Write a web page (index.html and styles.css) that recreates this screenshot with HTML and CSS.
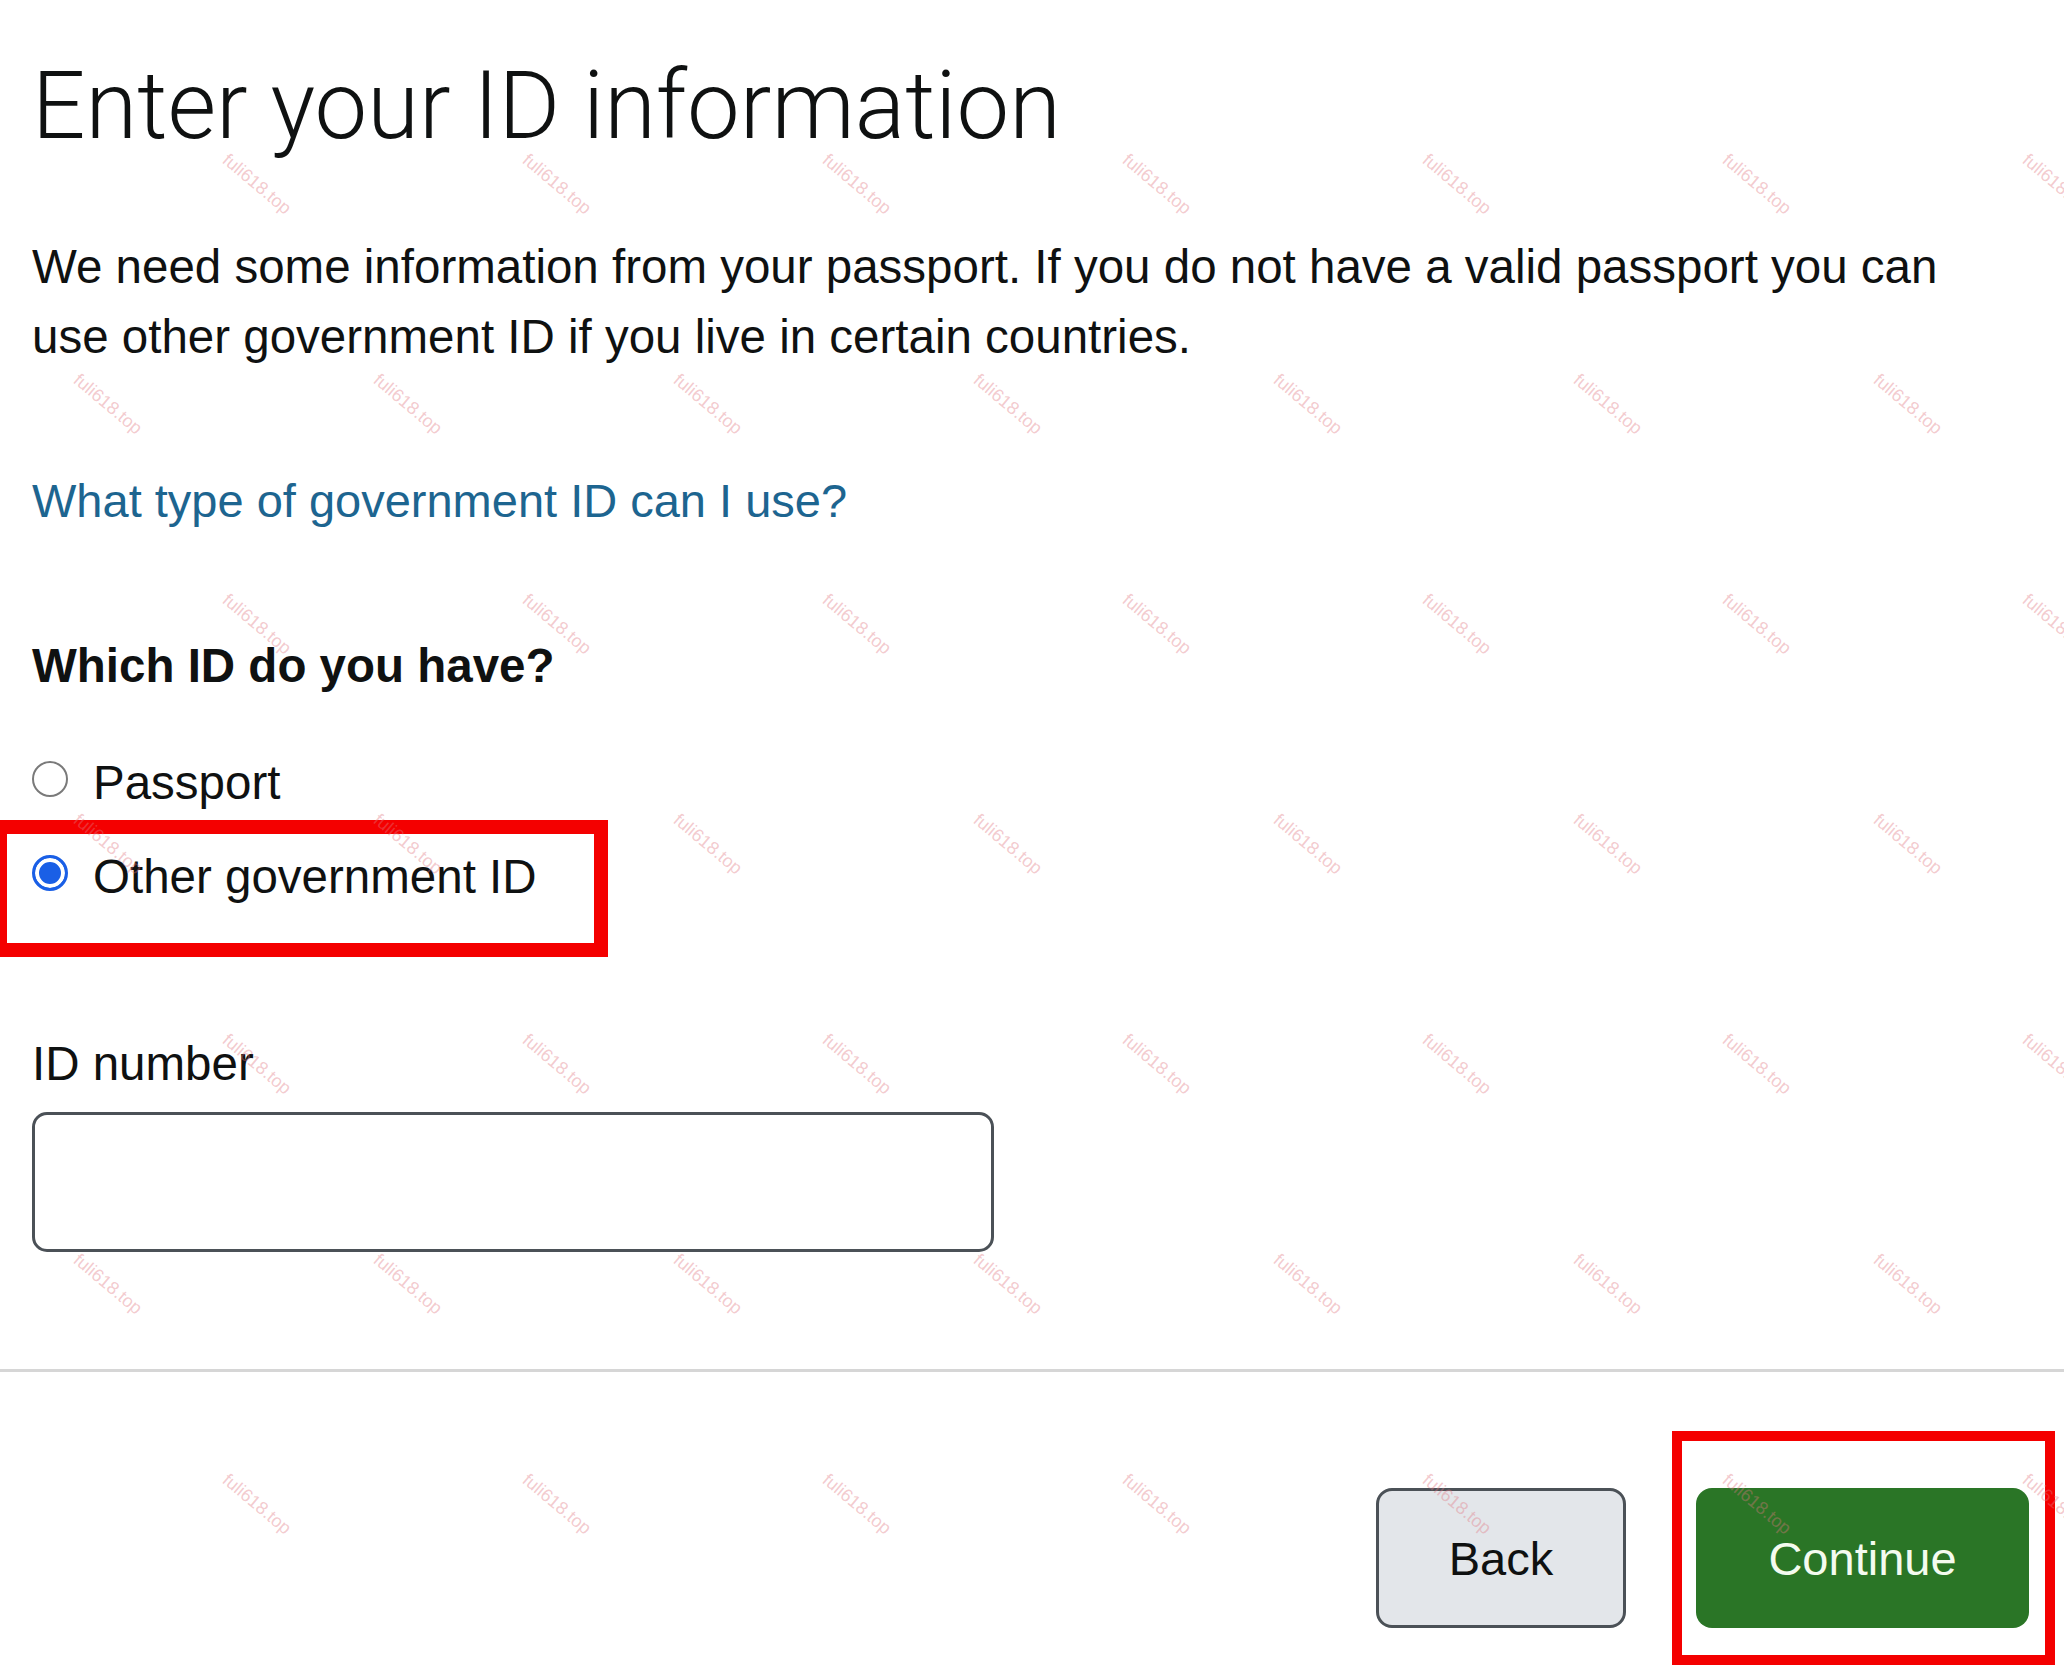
FILE: index.html
```html
<!DOCTYPE html>
<html lang="en">
<head>
<meta charset="utf-8">
<title>Enter your ID information</title>
<link rel="stylesheet" href="styles.css">
</head>
<body>
<div class="page">
  <main class="content">
    <h1 class="title">Enter your ID information</h1>
    <p class="intro">We need some information from your passport. If you do not have a valid passport you can use other government ID if you live in certain countries.</p>
    <a class="help-link" href="#">What type of government ID can I use?</a>
    <div class="id-choice" role="radiogroup" aria-labelledby="q">
      <div class="question" id="q">Which ID do you have?</div>
      <label class="option"><input type="radio" name="idtype" class="radio"><span>Passport</span></label>
      <label class="option option-highlight"><input type="radio" name="idtype" class="radio" checked><span>Other government ID</span></label>
    </div>
    <label class="field-label" for="idnum">ID number</label>
    <input class="text-input" id="idnum" type="text">
  </main>
  <hr class="divider">
  <footer class="actions">
    <button class="btn btn-back" type="button">Back</button>
    <button class="btn btn-continue" type="button">Continue</button>
  </footer>

  <div class="watermarks" aria-hidden="true">
    <div class="wm-row wm-odd"><span>fuli618.top</span><span>fuli618.top</span><span>fuli618.top</span><span>fuli618.top</span><span>fuli618.top</span><span>fuli618.top</span><span>fuli618.top</span></div>
    <div class="wm-row wm-even"><span>fuli618.top</span><span>fuli618.top</span><span>fuli618.top</span><span>fuli618.top</span><span>fuli618.top</span><span>fuli618.top</span><span>fuli618.top</span></div>
    <div class="wm-row wm-odd"><span>fuli618.top</span><span>fuli618.top</span><span>fuli618.top</span><span>fuli618.top</span><span>fuli618.top</span><span>fuli618.top</span><span>fuli618.top</span></div>
    <div class="wm-row wm-even"><span>fuli618.top</span><span>fuli618.top</span><span>fuli618.top</span><span>fuli618.top</span><span>fuli618.top</span><span>fuli618.top</span><span>fuli618.top</span></div>
    <div class="wm-row wm-odd"><span>fuli618.top</span><span>fuli618.top</span><span>fuli618.top</span><span>fuli618.top</span><span>fuli618.top</span><span>fuli618.top</span><span>fuli618.top</span></div>
    <div class="wm-row wm-even"><span>fuli618.top</span><span>fuli618.top</span><span>fuli618.top</span><span>fuli618.top</span><span>fuli618.top</span><span>fuli618.top</span><span>fuli618.top</span></div>
    <div class="wm-row wm-odd"><span>fuli618.top</span><span>fuli618.top</span><span>fuli618.top</span><span>fuli618.top</span><span>fuli618.top</span><span>fuli618.top</span><span>fuli618.top</span></div>
  </div>
</div>
</body>
</html>
```

FILE: styles.css
```css
*, *::before, *::after { box-sizing: border-box; }
html, body { margin: 0; padding: 0; background: #ffffff; }
body {
  font-family: "Liberation Sans", Arial, Helvetica, sans-serif;
  color: #0f1111;
  overflow: hidden;
}
.page {
  position: relative;
  width: 2064px;
  height: 1676px;
  overflow: hidden;
}
.content {
  padding: 51px 0 0 32px;
}
.title {
  margin: 0;
  font-family: Roboto, "Liberation Sans", sans-serif;
  font-weight: 300;
  font-size: 94px;
  line-height: 110px;
  color: #0f1111;
  letter-spacing: 0;
}
.intro {
  margin: 71px 0 0 0;
  max-width: 1950px;
  font-size: 47.5px;
  line-height: 70px;
}
.help-link {
  display: block;
  margin-top: 94px;
  font-size: 47px;
  line-height: 70px;
  color: #1d6590;
  text-decoration: none;
}
.question {
  margin-top: 95px;
  font-size: 47.5px;
  line-height: 70px;
  font-weight: 700;
}
.option {
  display: flex;
  align-items: center;
  height: 70px;
  font-size: 47.5px;
  line-height: 70px;
  margin-top: 47px;
}
.option + .option { margin-top: 24px; }
.radio {
  appearance: none;
  -webkit-appearance: none;
  width: 36px;
  height: 36px;
  margin: 0 25px 8px 0;
  border: 2.5px solid #7a7a7a;
  border-radius: 50%;
  background: #fff;
  flex: none;
}
.radio:checked {
  border: 3px solid #1a5fe6;
  background: #1a5fe6;
  box-shadow: inset 0 0 0 4px #ffffff;
}
.option-highlight { position: relative; }
.option-highlight::after {
  content: "";
  position: absolute;
  left: -39px;
  top: -22px;
  width: 615px;
  height: 137px;
  border: 14px solid #f40000;
  pointer-events: none;
}
.field-label {
  display: block;
  margin-top: 117px;
  font-size: 47.5px;
  line-height: 70px;
}
.text-input {
  display: block;
  margin: 13px 0 0 0;
  width: 962px;
  height: 140px;
  border: 3px solid #4b5157;
  border-radius: 15px;
  background: #fff;
  font: inherit;
  font-size: 46px;
  padding: 0 24px;
}
.divider {
  margin: 117px 0 0 0;
  height: 3px;
  border: 0;
  background: #d6d6d6;
}
.actions {
  display: flex;
  justify-content: flex-end;
  gap: 70px;
  padding: 116px 35px 0 0;
}
.btn {
  height: 140px;
  border-radius: 16px;
  font-family: "Liberation Sans", Arial, sans-serif;
  font-size: 47px;
  line-height: 1;
  cursor: pointer;
}
.btn-back {
  width: 250px;
  background: #e3e6ea;
  border: 3px solid #4b5157;
  color: #0f1111;
}
.btn-continue {
  position: relative;
  width: 333px;
  background: #2a7526;
  border: 0;
  color: #f4fbef;
}
.btn-continue::after {
  content: "";
  position: absolute;
  left: -24px;
  top: -57px;
  width: 383px;
  height: 234px;
  border: 10px solid #f40000;
  pointer-events: none;
}
.watermarks {
  position: absolute;
  left: 0;
  top: 74px;
  width: 2064px;
  pointer-events: none;
}
.wm-row {
  display: flex;
  height: 220px;
}
.wm-odd { padding-left: 107px; }
.wm-even { margin-left: -42px; }
.wm-row span {
  flex: none;
  width: 300px;
  height: 220px;
  display: flex;
  align-items: center;
  justify-content: center;
  font-family: "Liberation Sans", Arial, sans-serif;
  font-size: 18px;
  color: rgba(225, 120, 130, 0.4);
  transform: rotate(40deg);
}
```
